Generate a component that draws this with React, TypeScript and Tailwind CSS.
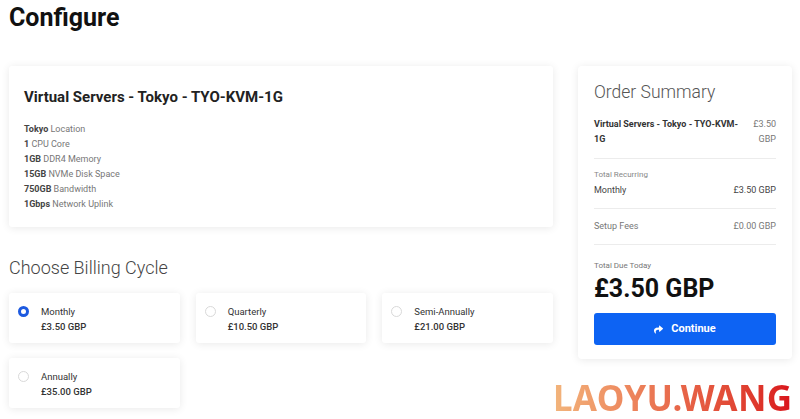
import { FaShare } from 'react-icons/fa';

const specs = [
  { bold: 'Tokyo', rest: 'Location' },
  { bold: '1', rest: 'CPU Core' },
  { bold: '1GB', rest: 'DDR4 Memory' },
  { bold: '15GB', rest: 'NVMe Disk Space' },
  { bold: '750GB', rest: 'Bandwidth' },
  { bold: '1Gbps', rest: 'Network Uplink' },
];

const cycles = [
  { name: 'Monthly', price: '£3.50 GBP', checked: true },
  { name: 'Quarterly', price: '£10.50 GBP', checked: false },
  { name: 'Semi-Annually', price: '£21.00 GBP', checked: false },
  { name: 'Annually', price: '£35.00 GBP', checked: false },
];

function Radio({ checked }: { checked: boolean }) {
  return checked ? (
    <span className="block w-[11px] h-[11px] rounded-full border-[3px] border-[#1d5ae0] bg-white" />
  ) : (
    <span className="block w-[11px] h-[11px] rounded-full border border-[#d9d9d9] bg-white" />
  );
}

export default function App() {
  return (
    <div
      className="relative w-[800px] h-[419px] overflow-hidden bg-white text-[#333]"
      style={{ fontFamily: 'Roboto, "Liberation Sans", sans-serif' }}
    >
      <h1 className="pl-[9px] pt-[3px] text-[25px] leading-[30px] font-bold text-[#111]">Configure</h1>

      <div className="flex pl-[9px] pt-[33px] gap-[25px]">
        {/* left column */}
        <div className="w-[544px]">
          <div className="h-[161px] bg-white rounded-[3px] shadow-[0_1px_8px_rgba(0,0,0,0.09)] pl-[15px] pt-[20px]">
            <h2 className="text-[15px] leading-[22px] font-bold text-[#222]">
              Virtual Servers - Tokyo - TYO-KVM-1G
            </h2>
            <ul className="mt-[14px] text-[9px] leading-[15px] text-[#777]">
              {specs.map((s) => (
                <li key={s.rest}>
                  <span className="font-bold text-[#444]">{s.bold}</span> {s.rest}
                </li>
              ))}
            </ul>
          </div>

          <h3 className="mt-[30px] text-[18px] leading-[22px] font-light text-[#444]">Choose Billing Cycle</h3>

          <div className="mt-[14px] grid grid-cols-3 gap-x-[16px] gap-y-[15px]">
            {cycles.map((c) => (
              <div
                key={c.name}
                className="h-[50px] bg-white rounded-[3px] shadow-[0_1px_8px_rgba(0,0,0,0.09)] flex pl-[9px] pt-[11px] gap-[12px]"
              >
                <div className="pt-[2px]">
                  <Radio checked={c.checked} />
                </div>
                <div className="text-[9.5px] leading-[15px] text-[#333]">
                  <div>{c.name}</div>
                  <div className="font-medium">{c.price}</div>
                </div>
              </div>
            ))}
          </div>
        </div>

        {/* right column */}
        <div className="w-[214px] h-[293px] bg-white rounded-[4px] shadow-[0_1px_8px_rgba(0,0,0,0.09)] px-[16px] pt-[15px]">
          <h3 className="text-[17.5px] leading-[22px] font-light text-[#555]">Order Summary</h3>
          <div className="mt-[14px] flex justify-between text-[9px] leading-[15px]">
            <span className="font-bold text-[#333] w-[150px]">Virtual Servers - Tokyo - TYO-KVM-1G</span>
            <span className="text-right text-[#777]">
              £3.50
              <br />
              GBP
            </span>
          </div>
          <div className="mt-[11px] border-t border-[#ececec]" />
          <div className="pt-[10px] text-[8px] leading-[12px] text-[#888]">Total Recurring</div>
          <div className="mt-[3px] flex justify-between text-[9px] leading-[12px] text-[#444]">
            <span>Monthly</span>
            <span>£3.50 GBP</span>
          </div>
          <div className="mt-[12px] border-t border-[#ececec]" />
          <div className="pt-[11px] flex justify-between text-[9px] leading-[12px] text-[#777]">
            <span>Setup Fees</span>
            <span>£0.00 GBP</span>
          </div>
          <div className="mt-[12px] border-t border-[#ececec]" />
          <div className="pt-[15px] text-[8px] leading-[12px] text-[#777]">Total Due Today</div>
          <div className="mt-[2px] text-[25px] leading-[30px] font-bold text-[#111]">£3.50 GBP</div>
          <button className="mt-[9px] w-full h-[32px] rounded-[3px] bg-[#0d63f3] text-white text-[11px] font-bold flex items-center justify-center gap-[8px]">
            <FaShare className="w-[9px] h-[9px]" />
            Continue
          </button>
        </div>
      </div>

      <div
        className="absolute left-[553px] top-[380px] text-[35px] leading-[36px] font-bold tracking-[0.3px] bg-gradient-to-r from-[#f2b57c] via-[#e86a4c] to-[#d9101c] bg-clip-text text-transparent"
        style={{ fontFamily: '"Noto Sans", "Open Sans", sans-serif' }}
      >
        LAOYU.WANG
      </div>
    </div>
  );
}
